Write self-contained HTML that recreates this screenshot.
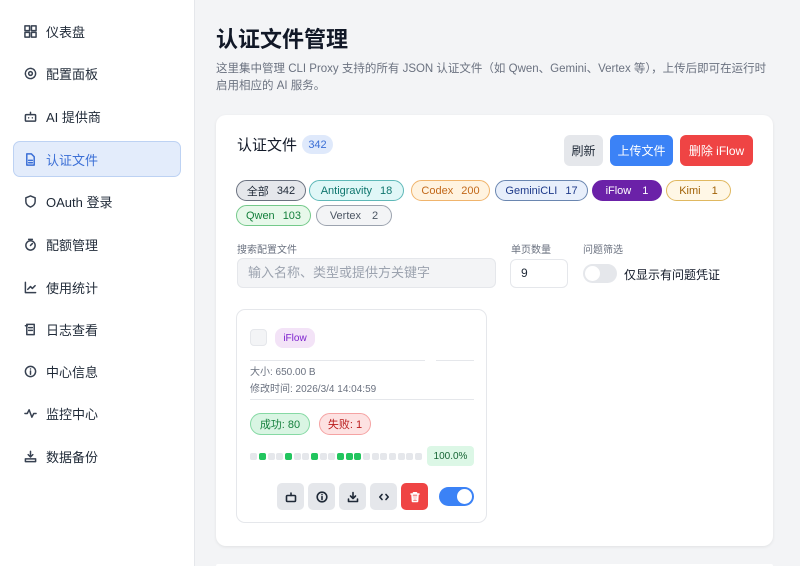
<!DOCTYPE html><html><head><meta charset="utf-8"><style>
*{box-sizing:border-box;margin:0;padding:0}
html,body{width:800px;height:566px;overflow:hidden}
body{background:#f3f4f6;font-family:"Liberation Sans","Noto Sans CJK SC",sans-serif;color:#1f2937;position:relative}
.a{position:absolute}
.side{left:0;top:0;width:195px;height:566px;background:#fff;border-right:1px solid #e5e7eb}
.it{position:absolute;left:13px;width:168px;height:36px;display:flex;align-items:center;padding-left:11px;font-size:13px;color:#1f2937}
.it svg{width:13px;height:13px;margin-right:9px;fill:none;stroke:#374151;stroke-width:1.6;stroke-linecap:round;stroke-linejoin:round}
.it.on{background:#e3ecfb;border:1px solid #bdd2f3;border-radius:7px;color:#3b6fd6;padding-left:10px}
.it.on svg{stroke:#3b6fd6}
.card{left:216px;top:115px;width:557px;height:431px;background:#fff;border-radius:10px;box-shadow:0 1px 3px rgba(0,0,0,.08)}
.btn{position:absolute;top:135px;height:31px;border-radius:6px;font-size:12px;display:flex;align-items:center;justify-content:center}
.chip{position:absolute;height:21px;border-radius:11px;border:1px solid;font-size:11px;display:flex;align-items:center;justify-content:center;gap:8px}
.lbl{position:absolute;top:241px;font-size:10px;color:#6b7280}
.ab{position:absolute;top:483px;width:27px;height:27px;border-radius:5px;background:#e5e7eb;display:flex;align-items:center;justify-content:center}
.ab svg{width:12px;height:12px;fill:none;stroke:#1f2937;stroke-width:1.6;stroke-linecap:round;stroke-linejoin:round}
.dot{position:absolute;top:453px;width:7px;height:7px;border-radius:2px;background:#e5e7eb}
.dot.g{background:#22c55e}
</style></head><body>
<div class="a side">
<div class="it" style="top:13px"><svg viewBox="0 0 14 14"><rect x="1" y="1" width="5" height="5"/><rect x="8" y="1" width="5" height="5"/><rect x="1" y="8" width="5" height="5"/><rect x="8" y="8" width="5" height="5"/></svg>仪表盘</div>
<div class="it" style="top:55px"><svg viewBox="0 0 14 14"><circle cx="7" cy="7" r="2"/><circle cx="7" cy="7" r="5.5" stroke-dasharray="2 1.2"/></svg>配置面板</div>
<div class="it" style="top:98px"><svg viewBox="0 0 14 14"><rect x="1.5" y="5" width="11" height="7" rx="1"/><path d="M7 5V2.5M5 8.5h0M9 8.5h0"/></svg>AI 提供商</div>
<div class="it on" style="top:141px"><svg viewBox="0 0 14 14"><path d="M3 1h5l3 3v9H3z"/><path d="M5 8h4M5 10.5h4"/></svg>认证文件</div>
<div class="it" style="top:183px"><svg viewBox="0 0 14 14"><path d="M7 1l5 2v4c0 3-2.5 5-5 6-2.5-1-5-3-5-6V3z"/></svg>OAuth 登录</div>
<div class="it" style="top:226px"><svg viewBox="0 0 14 14"><circle cx="7" cy="8" r="5"/><path d="M5 1.5h4M7 8l2-2"/></svg>配额管理</div>
<div class="it" style="top:269px"><svg viewBox="0 0 14 14"><path d="M1.5 1.5v11h11M4 9l3-3 2 2 3-3"/></svg>使用统计</div>
<div class="it" style="top:311px"><svg viewBox="0 0 14 14"><path d="M3 1.5h8v11H3zM5 5h4M5 8h4M1.5 3h2"/></svg>日志查看</div>
<div class="it" style="top:353px"><svg viewBox="0 0 14 14"><circle cx="7" cy="7" r="5.5"/><path d="M7 6.5v3.5M7 4.3v0"/></svg>中心信息</div>
<div class="it" style="top:395px"><svg viewBox="0 0 14 14"><path d="M1 7h2.5l2-4 3 8 2-4H13"/></svg>监控中心</div>
<div class="it" style="top:438px"><svg viewBox="0 0 14 14"><path d="M7 1.5v6M4.5 5L7 7.5 9.5 5M1.5 9.5h11v3h-11z"/></svg>数据备份</div>
</div>
<div class="a" style="left:216px;top:22px;font-size:22px;font-weight:bold;color:#111827">认证文件管理</div>
<div class="a" style="left:216px;top:61px;width:560px;font-size:11.5px;line-height:17px;color:#6b7280">这里集中管理 CLI Proxy 支持的所有 JSON 认证文件（如 Qwen、Gemini、Vertex 等），上传后即可在运行时启用相应的 AI 服务。</div>
<div class="a card"></div>
<div class="a" style="left:216px;top:564px;width:557px;height:2px;background:#fff;border-radius:10px 10px 0 0"></div>
<div class="a" style="left:237px;top:134px;font-size:15px;color:#111827">认证文件</div>
<div class="a" style="left:302px;top:135px;width:31px;height:19px;border-radius:10px;background:#dfe9fb;color:#3b6fd6;font-size:11px;display:flex;align-items:center;justify-content:center">342</div>
<div class="btn" style="left:564px;width:39px;background:#e5e7eb;color:#1f2937">刷新</div>
<div class="btn" style="left:610px;width:63px;background:#3b82f6;color:#fff">上传文件</div>
<div class="btn" style="left:680px;width:73px;background:#ef4444;color:#fff">删除 iFlow</div>
<div class="chip" style="left:236px;top:180px;width:70px;background:#e5e7eb;border-color:#6b7280;color:#1f2937"><span>全部</span><span>342</span></div>
<div class="chip" style="left:309px;top:180px;width:95px;background:#e0f7f7;border-color:#5eb8b8;color:#0f766e"><span>Antigravity</span><span>18</span></div>
<div class="chip" style="left:411px;top:180px;width:79px;background:#fff3e0;border-color:#f0b46c;color:#c2691a"><span>Codex</span><span>200</span></div>
<div class="chip" style="left:495px;top:180px;width:93px;background:#e8effb;border-color:#6a86b0;color:#1e3a8a"><span>GeminiCLI</span><span>17</span></div>
<div class="chip" style="left:592px;top:180px;width:70px;background:#6b21a8;border-color:#6b21a8;color:#fff"><span>iFlow</span><span>&nbsp;1</span></div>
<div class="chip" style="left:666px;top:180px;width:65px;background:#fff7e6;border-color:#e0b860;color:#a16207"><span>Kimi</span><span>&nbsp;1</span></div>
<div class="chip" style="left:236px;top:205px;width:75px;background:#e7f8ea;border-color:#74c98a;color:#15803d"><span>Qwen</span><span>103</span></div>
<div class="chip" style="left:316px;top:205px;width:76px;background:#f3f4f6;border-color:#9ca3af;color:#4b5563"><span>Vertex</span><span>&nbsp;2</span></div>
<div class="lbl" style="left:237px">搜索配置文件</div>
<div class="lbl" style="left:511px">单页数量</div>
<div class="lbl" style="left:583px">问题筛选</div>
<div class="a" style="left:237px;top:258px;width:259px;height:30px;background:#f3f4f6;border:1px solid #e5e7eb;border-radius:6px;font-size:13px;color:#9ca3af;padding:0 10px;line-height:28px">输入名称、类型或提供方关键字</div>
<div class="a" style="left:510px;top:259px;width:58px;height:29px;background:#fff;border:1px solid #e5e7eb;border-radius:6px;font-size:12px;padding:0 10px;line-height:27px">9</div>
<div class="a" style="left:583px;top:264px;width:34px;height:19px;background:#e5e7eb;border-radius:10px"><div class="a" style="left:2px;top:2px;width:15px;height:15px;border-radius:50%;background:#fff"></div></div>
<div class="a" style="left:624px;top:266px;font-size:12px;color:#111827">仅显示有问题凭证</div>
<div class="a" style="left:236px;top:309px;width:251px;height:214px;border:1px solid #e5e7eb;border-radius:9px;background:#fff"></div>
<div class="a" style="left:250px;top:329px;width:17px;height:17px;border-radius:4px;background:#f3f4f6;border:1px solid #e5e7eb"></div>
<div class="a" style="left:275px;top:328px;width:40px;height:20px;border-radius:8px;background:#f3e3f7;color:#7e22ce;font-size:10px;display:flex;align-items:center;justify-content:center">iFlow</div>
<div class="a" style="left:250px;top:360px;width:175px;height:1px;background:#e5e7eb"></div>
<div class="a" style="left:436px;top:360px;width:38px;height:1px;background:#e5e7eb"></div>
<div class="a" style="left:250px;top:364px;font-size:10px;color:#6b7280;line-height:17px">大小: 650.00 B<br>修改时间: 2026/3/4 14:04:59</div>
<div class="a" style="left:250px;top:399px;width:224px;height:1px;background:#e5e7eb"></div>
<div class="a" style="left:250px;top:413px;width:60px;height:22px;border-radius:11px;background:#d9f5e3;border:1px solid #86d9a4;color:#15803d;font-size:11px;display:flex;align-items:center;justify-content:center">成功: 80</div>
<div class="a" style="left:319px;top:413px;width:52px;height:22px;border-radius:11px;background:#fde2e2;border:1px solid #f5a3a3;color:#b91c1c;font-size:11px;display:flex;align-items:center;justify-content:center">失败: 1</div>
<div class="dot" style="left:250px"></div><div class="dot g" style="left:259px"></div><div class="dot" style="left:268px"></div><div class="dot" style="left:276px"></div><div class="dot g" style="left:285px"></div><div class="dot" style="left:294px"></div><div class="dot" style="left:302px"></div><div class="dot g" style="left:311px"></div><div class="dot" style="left:320px"></div><div class="dot" style="left:328px"></div><div class="dot g" style="left:337px"></div><div class="dot g" style="left:346px"></div><div class="dot g" style="left:354px"></div><div class="dot" style="left:363px"></div><div class="dot" style="left:372px"></div><div class="dot" style="left:380px"></div><div class="dot" style="left:389px"></div><div class="dot" style="left:398px"></div><div class="dot" style="left:406px"></div><div class="dot" style="left:415px"></div>
<div class="a" style="left:427px;top:446px;width:47px;height:20px;border-radius:4px;background:#dcf7e6;color:#166534;font-size:10px;display:flex;align-items:center;justify-content:center">100.0%</div>
<div class="ab" style="left:277px"><svg viewBox="0 0 12 12"><rect x="1.5" y="4.5" width="9" height="6" rx="1"/><path d="M6 4.5V2"/></svg></div>
<div class="ab" style="left:308px"><svg viewBox="0 0 12 12"><circle cx="6" cy="6" r="4.8"/><path d="M6 5.5v3M6 3.5v0"/></svg></div>
<div class="ab" style="left:339px"><svg viewBox="0 0 12 12"><path d="M6 1.5v6M3.5 5L6 7.5 8.5 5M1.5 8v2.5h9V8"/></svg></div>
<div class="ab" style="left:370px"><svg viewBox="0 0 12 12"><path d="M4 3.5L1.8 6 4 8.5M8 3.5L10.2 6 8 8.5"/></svg></div>
<div class="ab" style="left:401px;background:#ef4444"><svg viewBox="0 0 12 12" style="stroke:#fff"><path d="M2 3h8M4.5 3V1.8h3V3M3 3l.5 7.5h5L9 3M5 5v3.5M7 5v3.5"/></svg></div>
<div class="a" style="left:439px;top:487px;width:35px;height:19px;border-radius:10px;background:#3b82f6"><div class="a" style="left:18px;top:2px;width:15px;height:15px;border-radius:50%;background:#fff"></div></div>
</body></html>
